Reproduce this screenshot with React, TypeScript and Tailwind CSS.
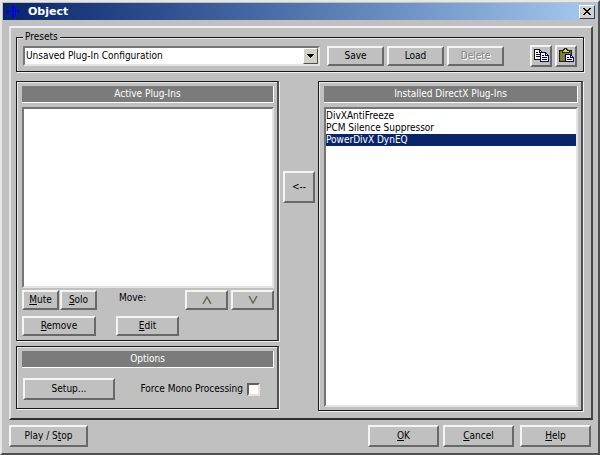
import { useState } from "react";
import type { ReactNode } from "react";

const plugins = ["DivXAntiFreeze", "PCM Silence Suppressor", "PowerDivX DynEQ"];

const raised =
  "flex items-center justify-center whitespace-nowrap border-2 border-t-[#f4f4f4] border-l-[#f4f4f4] border-r-[#686868] border-b-[#686868] bg-[#c0c0c0]";
const sunken =
  "border-2 border-t-[#747474] border-l-[#747474] border-r-[#e6e4e0] border-b-[#e6e4e0] bg-white";
const etched =
  "border border-[#181818] shadow-[1px_1px_0_#f0f0f0,inset_1px_1px_0_#e8e8e8]";

function Button({ className, children, label, disabled }: { className: string; children: ReactNode; label?: string; disabled?: boolean }) {
  return (
    <button type="button" aria-label={label} disabled={disabled} className={`${raised} ${className}`}>
      {children}
    </button>
  );
}

function Header({ children }: { children: ReactNode }) {
  return (
    <h2 className="h-[17px] shrink-0 border-r border-b border-white bg-[#7b7b7b] text-center leading-4 text-white">
      {children}
    </h2>
  );
}

function CopyIcon() {
  return (
    <svg width="15" height="14" viewBox="0 0 15 14" shapeRendering="crispEdges" aria-hidden="true">
      <path d="M0.5 0.5H5.5L8.5 3.5V10.5H0.5Z" fill="#fff" stroke="#111" />
      <path d="M5.5 0.5V3.5H8.5M2 3.5H4M2 5.5H7M2 7.5H7" fill="none" stroke="#111" />
      <path d="M6.5 3.5H11.5L14.5 6.5V12.5H6.5Z" fill="#fff" stroke="#000080" />
      <path d="M11.5 3.5V6.5H14.5M8 6.5H10M8 8.5H13M8 10.5H13" fill="none" stroke="#000080" />
    </svg>
  );
}

function PasteIcon() {
  return (
    <svg width="15" height="15" viewBox="0 0 15 15" shapeRendering="crispEdges" aria-hidden="true">
      <path d="M0.5 2.5H12.5V13.5H0.5Z" fill="#77773a" stroke="#222211" />
      <path d="M2 5.5H12M2 7.5H12M2 9.5H12M2 11.5H12" stroke="#929240" strokeDasharray="1 1" />
      <path d="M3 4.5V2.5H4.5V1.5H5.5V0.5H7.5V1.5H8.5V2.5H10V4.5Z" fill="#e0d850" stroke="#222" />
      <path d="M6.5 6.5H11.5L14.5 9.5V13.5H6.5Z" fill="#fff" stroke="#000080" />
      <path d="M11.5 6.5V9.5H14.5M8 9.5H10M8 11.5H13" fill="none" stroke="#000080" />
    </svg>
  );
}

export default function App() {
  const [selected, setSelected] = useState("PowerDivX DynEQ");
  return (
    <main className="flex min-h-screen w-full flex-col border-2 border-t-[#e8e6e2] border-l-[#e8e6e2] border-r-[#505050] border-b-[#505050] bg-[#c0c0c0] p-px font-['DejaVu_Sans_Condensed','DejaVu_Sans',sans-serif] text-[10px] leading-3 text-black">
      <header className="flex h-[17px] items-center bg-linear-to-r from-[#0a246a] to-[#a6caf0] pr-0.5 pl-0.5">
        <svg width="15" height="14" viewBox="0 0 15 14" shapeRendering="crispEdges" aria-hidden="true">
          <path d="M0 6h2v-2h1v1h1v1h1v1h-1v1h-1v1h-1v-2h-2zM7 1h2v12h-2zM6 6h8v1h-8zM10 2h1v10h-1zM13 4h1v2h1v1h-1v2h-1z" fill="#0000ff" />
        </svg>
        <h1 className="grow pl-2 font-['DejaVu_Sans',sans-serif] text-[11px] font-bold text-white">Object</h1>
        <button type="button" aria-label="Close" className="flex h-3.5 w-4 items-center justify-center border border-t-white border-l-white border-r-[#404040] border-b-[#404040] bg-[#d4d0c8]">
          <svg width="8" height="7" viewBox="0 0 8 7" shapeRendering="crispEdges" aria-hidden="true">
            <path d="M0 0h2v1h1v1h2V1h1V0h2v1H7v1H6v1H5v1h1v1h1v1h1v1H6V6H5V5H3v1H2v1H0V6h1V5h1V4h1V3H2V2H1V1H0Z" fill="#000" />
          </svg>
        </button>
      </header>

      <div className="mt-1.5 mr-1 ml-1.5 flex grow flex-col border-2 border-t-[#f0f0f0] border-l-[#e4e4e4] border-r-[#484848] border-b-[#303030] pt-[9px] pr-[7px] pb-[7px] pl-[5px]">
        <fieldset className={`${etched} relative`}>
          <legend className="absolute -top-[7px] left-1.5 bg-[#c0c0c0] px-0.5">Presets</legend>
          <div className="flex h-[33px] items-center px-1.5 pt-0.5">
            <div className={`${sunken} relative flex h-5 grow`}>
              <select aria-label="Preset" className="w-full appearance-none bg-white pl-px leading-4 outline-none">
                <option>Unsaved Plug-In Configuration</option>
              </select>
              <span className="pointer-events-none absolute inset-y-0 right-0 flex w-[15px] items-center justify-center border border-t-white border-l-white border-r-[#505050] border-b-[#505050] bg-[#d4d0c8]">
                <svg width="7" height="4" viewBox="0 0 7 4" shapeRendering="crispEdges" aria-hidden="true">
                  <path d="M0 0H7V1H6V2H5V3H4V4H3V3H2V2H1V1H0Z" />
                </svg>
              </span>
            </div>
            <div className="ml-[7px] flex gap-[3px]">
              <Button className="h-5 w-[57px]">Save</Button>
              <Button className="h-5 w-[57px]">Load</Button>
              <Button disabled className="h-5 w-[57px] text-[#808080] [text-shadow:1px_1px_0_#fff]">Delete</Button>
            </div>
            <div className="ml-[26px] flex gap-[3px]">
              <Button label="Copy" className="h-[22px] w-[22px]"><CopyIcon /></Button>
              <Button label="Paste" className="h-[22px] w-[22px]"><PasteIcon /></Button>
            </div>
          </div>
        </fieldset>

        <div className="mt-[9px] flex grow">
          <div className="flex w-[263px] flex-col gap-[5px] pb-0.5">
            <section className={`${etched} flex grow flex-col border-r-2 border-r-[#505050] pt-1 pr-[3px] pb-1 pl-[5px]`}>
              <Header>Active Plug-Ins</Header>
              <ul role="listbox" aria-label="Active Plug-Ins" className={`${sunken} mt-1 grow`} />
              <div className="mt-0.5 flex">
                <Button className="h-5 w-[37px]"><span><u>M</u>ute</span></Button>
                <Button className="ml-px h-5 w-[37px]"><span><u>S</u>olo</span></Button>
                <span className="grow pt-0.5 pl-[22px]">Move:</span>
                <div className="flex gap-[3px]">
                  <Button label="Move up" className="h-5 w-[43px]">
                    <svg width="10" height="8" viewBox="0 0 10 8" aria-hidden="true"><path d="M1 8L5 1L9 8" fill="none" stroke="#66664c" strokeWidth="1.5" /></svg>
                  </Button>
                  <Button label="Move down" className="h-5 w-[43px]">
                    <svg width="10" height="8" viewBox="0 0 10 8" aria-hidden="true"><path d="M1 0L5 7L9 0" fill="none" stroke="#66664c" strokeWidth="1.5" /></svg>
                  </Button>
                </div>
              </div>
              <div className="mt-1.5 flex gap-5">
                <Button className="h-5 w-[74px]"><span><u>R</u>emove</span></Button>
                <Button className="h-5 w-[63px]"><span><u>E</u>dit</span></Button>
              </div>
            </section>
            <section className={`${etched} border-r-2 border-r-[#505050] pt-1 pr-[3px] pb-2 pl-[5px]`}>
              <Header>Options</Header>
              <div className="mt-2.5 flex items-center">
                <Button className="ml-px h-[22px] w-[92px]">Setup...</Button>
                <label htmlFor="mono" className="grow pr-1 text-right">Force Mono Processing</label>
                <input id="mono" type="checkbox" className="mr-3.5 size-[13px] appearance-none border-2 border-t-[#606060] border-l-[#606060] border-r-[#e8e4dc] border-b-[#e8e4dc] bg-white checked:bg-black" />
              </div>
            </section>
          </div>

          <Button label="Add plug-in" className="mt-[90px] mr-[3px] ml-1 h-8 w-8 shrink-0">&lt;--</Button>

          <section className={`${etched} mr-px flex grow flex-col border-r-2 border-r-[#505050] pt-1 pr-[3px] pb-[3px] pl-[5px]`}>
            <Header>Installed DirectX Plug-Ins</Header>
            <ul role="listbox" aria-label="Installed DirectX Plug-Ins" className={`${sunken} mt-1 grow pt-px`}>
              {plugins.map((name) => (
                <li
                  key={name}
                  role="option"
                  aria-selected={name === selected}
                  onClick={() => setSelected(name)}
                  className="cursor-default aria-selected:bg-[#0a246a] aria-selected:text-white"
                >
                  {name}
                </li>
              ))}
            </ul>
          </section>
        </div>
      </div>

      <footer className="mx-1.5 my-[5px] flex">
        <Button className="mr-auto h-[22px] w-[79px]"><span>Play / S<u>t</u>op</span></Button>
        <Button className="h-[22px] w-[71px]"><span><u>O</u>K</span></Button>
        <Button className="ml-1 h-[22px] w-[71px]"><span><u>C</u>ancel</span></Button>
        <Button className="ml-1.5 h-[22px] w-[71px]"><span><u>H</u>elp</span></Button>
      </footer>
    </main>
  );
}
